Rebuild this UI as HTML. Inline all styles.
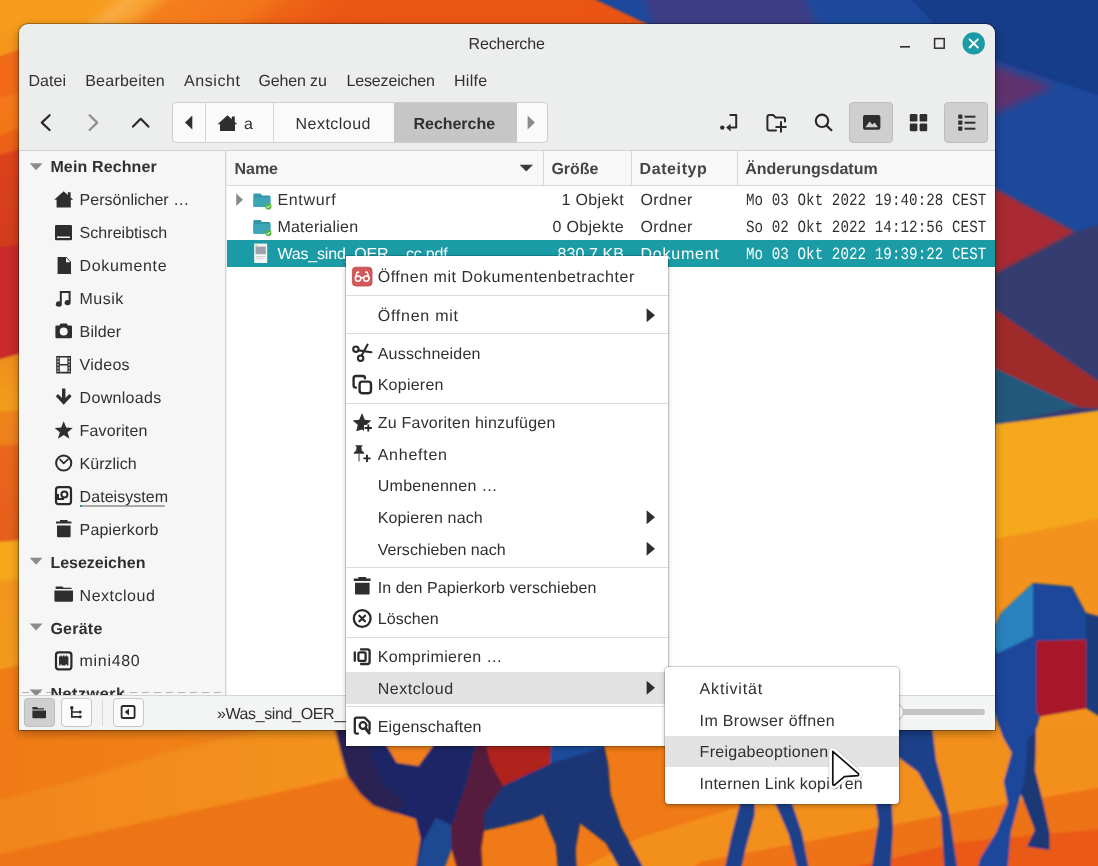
<!DOCTYPE html>
<html lang="de"><head><meta charset="utf-8"><title>Recherche</title>
<style>
html,body{margin:0;padding:0}
body{width:1098px;height:866px;overflow:hidden;position:relative;background:#f07a18;font-family:"Liberation Sans",sans-serif;font-size:16px;color:#303030}
#bg{position:absolute;left:0;top:0;width:1098px;height:866px}
.abs{position:absolute}
.t{position:absolute;white-space:pre;line-height:20px;height:20px;font-size:16px;text-rendering:geometricPrecision}
.s{font-family:"Liberation Sans",sans-serif}
.m{font-family:"Liberation Mono",monospace;transform:scaleY(1.2);transform-origin:0 55%}
.b{font-weight:bold}
#win{position:absolute;left:19px;top:24px;width:976px;height:706px;background:#eceded;border-radius:9px 9px 0 0;box-shadow:0 0 0 1px rgba(0,0,0,.3),0 3px 10px rgba(0,0,0,.35);overflow:hidden}
#page{position:absolute;left:0;top:0;width:1098px;height:866px}
#sidebar{position:absolute;left:19px;top:150px;width:207px;height:545px;background:#f6f6f6;border-right:1px solid #d4d4d4;border-top:1px solid #d0d0d0;box-sizing:border-box}
#listhead{position:absolute;left:227px;top:150px;width:768px;height:36px;background:#f8f8f8;border-top:1px solid #d0d0d0;border-bottom:1px solid #d6d6d6;box-sizing:border-box}
#list{position:absolute;left:227px;top:186px;width:768px;height:509px;background:#fff}
#selrow{position:absolute;left:227px;top:240px;width:768px;height:26.5px;background:#1a9ba6}
.colsep{position:absolute;top:151px;width:1px;height:34px;background:#d9d9d9}
#status{position:absolute;left:19px;top:695px;width:976px;height:35px;background:#f3f4f4;border-top:1px solid #d4d4d4;box-sizing:border-box}
#pathbar{position:absolute;left:172px;top:102px;width:376px;height:41px;box-sizing:border-box;border:1px solid #cdcdcd;border-radius:4px;background:#fafafa;overflow:hidden}
.psep{position:absolute;top:0;width:1px;height:41px;background:#d4d4d4}
.tbtn{position:absolute;top:102px;height:41px;box-sizing:border-box;border:1px solid #bdbdbd;border-radius:4px;background:#cfcfcf}
.sbtn{position:absolute;top:698px;width:30.6px;height:29px;box-sizing:border-box;border:1px solid #c6c6c6;border-radius:4px;background:#fbfbfb}
.clipnet{height:10px;overflow:hidden}
#menu{position:absolute;left:346px;top:256px;width:321.5px;height:490px;background:#fff;box-shadow:0 0 0 1px rgba(0,0,0,.16),0 2px 5px rgba(0,0,0,.25)}
#submenu{position:absolute;left:664.5px;top:666.5px;width:234.5px;height:137px;background:#fff;border-radius:4px;box-shadow:0 0 0 1px rgba(0,0,0,.16),0 2px 5px rgba(0,0,0,.25)}
.msep{position:absolute;left:346px;width:321.5px;height:1px;background:#dcdcdc}
.mhl{position:absolute;background:#e2e2e2}
svg{position:absolute;overflow:visible}
</style></head><body>
<svg id="bg" width="1098" height="866" viewBox="0 0 1098 866">
<defs>
<linearGradient id="gTop" x1="0" y1="0" x2="1" y2="0">
 <stop offset="0" stop-color="#f79c1d"/><stop offset=".066" stop-color="#f79c1d"/><stop offset=".082" stop-color="#f9ab42"/>
 <stop offset=".1" stop-color="#f8a030"/><stop offset=".12" stop-color="#f57f1c"/><stop offset=".195" stop-color="#f3741a"/>
 <stop offset=".22" stop-color="#ee6416"/><stop offset=".27" stop-color="#ea5614"/><stop offset="1" stop-color="#e95214"/>
</linearGradient>
<linearGradient id="gLeft" gradientUnits="userSpaceOnUse" x1="0" y1="0" x2="0" y2="866">
 <stop offset="0" stop-color="#f79d1d"/><stop offset=".06" stop-color="#f6931c"/><stop offset=".066" stop-color="#f26c18"/>
 <stop offset=".108" stop-color="#f26a17"/><stop offset=".116" stop-color="#f4791a"/><stop offset=".155" stop-color="#f37419"/>
 <stop offset=".162" stop-color="#ed6116"/><stop offset=".18" stop-color="#eb5a16"/><stop offset=".187" stop-color="#dc441b"/>
 <stop offset=".28" stop-color="#d23c1c"/><stop offset=".288" stop-color="#c92c2a"/><stop offset=".41" stop-color="#c92b2b"/>
 <stop offset=".418" stop-color="#f0901c"/><stop offset=".47" stop-color="#f49e1e"/><stop offset=".478" stop-color="#ef841a"/>
 <stop offset=".512" stop-color="#ee7f1a"/><stop offset=".518" stop-color="#e9661a"/><stop offset=".62" stop-color="#e55e1a"/>
 <stop offset=".628" stop-color="#f6a81f"/><stop offset=".665" stop-color="#f6a61f"/><stop offset=".69" stop-color="#f2921c"/>
 <stop offset=".76" stop-color="#f39a1d"/><stop offset=".775" stop-color="#f07c18"/><stop offset="1" stop-color="#f07a17"/>
</linearGradient>
<filter id="bl" x="-5%" y="-5%" width="110%" height="110%"><feGaussianBlur stdDeviation="0.8"/></filter>
<filter id="bl2" x="-10%" y="-10%" width="120%" height="120%"><feGaussianBlur stdDeviation="1.6"/></filter>
<filter id="bl3" x="-20%" y="-20%" width="140%" height="140%"><feGaussianBlur stdDeviation="4"/></filter>
<linearGradient id="gl0" gradientUnits="userSpaceOnUse" x1="0" y1="0.0" x2="0" y2="59.7"><stop offset="0" stop-color="#f79d1d"/><stop offset="1" stop-color="#f6941c"/></linearGradient>
<linearGradient id="gl1" gradientUnits="userSpaceOnUse" x1="0" y1="59.7" x2="0" y2="100.0"><stop offset="0" stop-color="#f26b18"/><stop offset="1" stop-color="#f26a17"/></linearGradient>
<linearGradient id="gl2" gradientUnits="userSpaceOnUse" x1="0" y1="100.0" x2="0" y2="138.5"><stop offset="0" stop-color="#f4781a"/><stop offset="1" stop-color="#f37519"/></linearGradient>
<linearGradient id="gl3" gradientUnits="userSpaceOnUse" x1="0" y1="138.5" x2="0" y2="158.8"><stop offset="0" stop-color="#ed6216"/><stop offset="1" stop-color="#eb5c16"/></linearGradient>
<linearGradient id="gl4" gradientUnits="userSpaceOnUse" x1="0" y1="158.8" x2="0" y2="248.3"><stop offset="0" stop-color="#db431b"/><stop offset="1" stop-color="#d23b1c"/></linearGradient>
<linearGradient id="gl5" gradientUnits="userSpaceOnUse" x1="0" y1="248.3" x2="0" y2="362.6"><stop offset="0" stop-color="#c92b2b"/><stop offset="1" stop-color="#c92b2b"/></linearGradient>
<linearGradient id="gl6" gradientUnits="userSpaceOnUse" x1="0" y1="362.6" x2="0" y2="412.0"><stop offset="0" stop-color="#f0901c"/><stop offset="1" stop-color="#f49e1e"/></linearGradient>
<linearGradient id="gl7" gradientUnits="userSpaceOnUse" x1="0" y1="412.0" x2="0" y2="447.0"><stop offset="0" stop-color="#ef841a"/><stop offset="1" stop-color="#ee801a"/></linearGradient>
<linearGradient id="gl8" gradientUnits="userSpaceOnUse" x1="0" y1="447.0" x2="0" y2="542.8"><stop offset="0" stop-color="#e9661a"/><stop offset="1" stop-color="#e55e1a"/></linearGradient>
<linearGradient id="gl9" gradientUnits="userSpaceOnUse" x1="0" y1="542.8" x2="0" y2="582.0"><stop offset="0" stop-color="#f6a81f"/><stop offset="1" stop-color="#f6a61f"/></linearGradient>
<linearGradient id="gl10" gradientUnits="userSpaceOnUse" x1="0" y1="582.0" x2="0" y2="672.0"><stop offset="0" stop-color="#f2951c"/><stop offset="1" stop-color="#f39a1d"/></linearGradient>
<linearGradient id="gl11" gradientUnits="userSpaceOnUse" x1="0" y1="672.0" x2="0" y2="870.0"><stop offset="0" stop-color="#f07b18"/><stop offset="1" stop-color="#f07a17"/></linearGradient>
<linearGradient id="gAbove" gradientUnits="userSpaceOnUse" x1="20" y1="0" x2="330" y2="0"><stop offset="0" stop-color="#f07b18"/><stop offset="1" stop-color="#f2881b"/></linearGradient>
<linearGradient id="gBand" gradientUnits="userSpaceOnUse" x1="0" y1="0" x2="330" y2="0"><stop offset="0" stop-color="#f1861a"/><stop offset="1" stop-color="#f4921e"/></linearGradient>
</defs>
<rect width="1098" height="866" fill="#f07a17"/>
<!-- left strip -->
<g filter="url(#bl)">
<polygon points="-12,-12 24,-12 24,49 -12,61.1" fill="url(#gl0)"/>
<polygon points="-12,60.1 24,48 24,92.9 -12,101.1" fill="url(#gl1)"/>
<polygon points="-12,100.1 24,91.9 24,127.8 -12,139.9" fill="url(#gl2)"/>
<polygon points="-12,138.9 24,126.8 24,148.2 -12,160.2" fill="url(#gl3)"/>
<polygon points="-12,159.2 24,147.2 24,245.5 -12,249.1" fill="url(#gl4)"/>
<polygon points="-12,248.1 24,244.5 24,353.5 -12,363.9" fill="url(#gl5)"/>
<polygon points="-12,362.9 24,352.5 24,411.2 -12,412.6" fill="url(#gl6)"/>
<polygon points="-12,411.6 24,410.2 24,445.2 -12,447.7" fill="url(#gl7)"/>
<polygon points="-12,446.7 24,444.2 24,541 -12,543.5" fill="url(#gl8)"/>
<polygon points="-12,542.5 24,540 24,580 -12,582.7" fill="url(#gl9)"/>
<polygon points="-12,581.7 24,579 24,664.9 -12,673.1" fill="url(#gl10)"/>
<polygon points="-12,672.1 24,663.9 24,880 -12,880" fill="url(#gl11)"/>
</g>
<!-- top strip -->
<rect x="-12" y="-12" width="60" height="42" fill="#f79c1d"/>
<g transform="skewX(-50)"><rect x="0" y="-12" width="1200" height="44" fill="url(#gTop)" transform="translate(30,0)"/></g>
<g filter="url(#bl)">
<!-- top right blue -->
<polygon points="571,-12 1112,-12 1112,30 660,30" fill="#1d4a9c"/>
<polygon points="640,-12 800,-12 820,30 655,30" fill="#3c3c86" filter="url(#bl3)"/>
<polygon points="900,-12 1112,-12 1112,95 995,60 940,30" fill="#173c8a"/>
<!-- right strip -->
<rect x="990" y="30" width="125" height="400" fill="#1b4a9b"/>
<polygon points="990,30 1112,30 1112,100 990,59" fill="#173c8a"/>
<polygon points="990,64 1054,86.6 990,116" fill="#6e2f66" opacity=".85" filter="url(#bl3)"/>
<polygon points="990,272 1075,232 1112,220 1112,430 990,430" fill="#353d6f"/>
<polygon points="988,185 1075,232 988,277" fill="#a92c30" filter="url(#bl2)"/>
<polygon points="990,306 1112,391 1112,409 1078,407 990,366" fill="#9e2a2c"/>
<polygon points="990,366 1078,407 990,426" fill="#23587c"/>
<path d="M 990 425 Q 1040 419 1112 409 L 1112 520 L 990 545 Z" fill="#f6a81f"/>
<polygon points="990,540 1112,516 1112,745 990,745" fill="#f3921d"/>
</g>

<!-- bottom bands -->
<g filter="url(#bl)">
<polygon points="20,720 420,720 420,760 20,810" fill="url(#gAbove)"/>
<polygon points="-12,803 67,783 167,753 233,737 260,728 420,728 420,760 366,773 300,788 -12,857" fill="url(#gBand)" filter="url(#bl2)"/>
<polygon points="-12,857 300,788 366,773 420,760 420,880 -12,880" fill="#ee7517"/>
<polygon points="560,880 639,838 740,806 860,768 899,728 1112,728 1112,785.5 960,812 700,862 680,880" fill="#f3901d"/>
<polygon points="680,880 700,862 960,812 1112,785.5 1112,828 960,842 800,880" fill="#ee7317"/>
<polygon points="800,880 960,842 1112,828 1112,880" fill="#ea5a14"/>
<!-- camel 1 -->
<path d="M 335 726 L 341.9 753.9 L 348.2 775.6 L 361 793.4 L 373.8 804.9 L 395 812.5 L 415.8 818.9 L 420.5 838.7 L 414 880 L 440 880 L 451.7 848.3 L 460.6 880 L 482.5 880 L 481 848 L 483.8 830.5 L 503 826.4 L 532 819 L 543 814 L 556 845 L 559 880 L 577 880 L 575.5 849 L 580 823 L 606 843 L 626 880 L 650 880 L 621 827 L 610.5 794.6 L 608 764 L 603 740 L 600 700 L 334 700 Z" fill="#1b2866"/>
<polygon points="382,738 396.7,762.8 418.4,766 436,742 438,738" fill="#f1801a"/>
<polygon points="335,726 341.9,753.9 348.2,775.6 361,793.4 373.8,804.9 395,812.5 406,802 385,786 372,760 366,726" fill="#2b2252" filter="url(#bl2)"/>
<polygon points="423,842 436,818 451,825 451.7,848.3 440,880 414,880" fill="#1c4a92"/>
<polygon points="477,740 485,740 490,762 503,786 490,805 483.8,814 483.8,830.5 481,848 482.5,880 460.6,880 451.7,848.3 451,825 453.8,821 467.4,780" fill="#561c3e"/>
<polygon points="485,740 551.5,740 550,764 503,786 490,762" fill="#b0201c"/>
<polygon points="551.5,740 603,740 603,748 550,764" fill="#1f4c9a"/>
<polygon points="503,786 550,764 603,748 608,764 610.5,794.6 621,827 650,880 626,880 606,843 580,823 575.5,849 577,880 559,880 556,845 543,814 532,819 503,826.4 483.8,830.5 483.8,814 490,805" fill="#1b3474"/>
<!-- camel 2 legs -->
<polygon points="741,800 755,800 754.5,816 745.8,848 739,880 722.4,880 731,838" fill="#1b3f8a"/>
<polygon points="773.7,800 791,800 802,833 811,880 800,880 789,835" fill="#1b3f8a"/>
<polygon points="875,800 891.7,800 893,830 890,880 870,880 878.6,822" fill="#1b3f8a"/>
<polygon points="895,725 932,725 936,760 943,786 950,818 959,880 945,880 941,814 918,772 895,755" fill="#1b3f8a"/>
<!-- camel 3 -->
<path d="M 990 636 L 1001 613 L 1033 583 L 1072 586.5 L 1086 613 L 1112 620 L 1112 724 L 1086 708 L 1040 716 L 1036 730 L 1035 771 L 1043.3 803.8 L 1049.4 832 L 1049.4 850 L 1027 846.5 L 1029 842.4 L 1035 830 L 1021 793.7 L 1010.8 832 L 1006.7 880 L 975 880 L 980 858.7 L 996.6 832 L 1007.8 803.8 L 1003.7 781.5 L 1011.8 753 L 1002.7 736.7 L 990 700 Z" fill="#1c469a"/>
<polygon points="990,640 1001,613 1033,583 1033,636 997.7,653.6" fill="#2a82bf"/>
<polygon points="1036.5,641 1086,639.5 1086,708 1040,716 1036.5,712" fill="#a8182a"/>
<polygon points="1086,613 1112,620 1112,724 1086,708" fill="#1b3a7c"/>
<polygon points="1036,730 1035,771 1043.3,803.8 1049.4,832 1049.4,850 1027,846.5 1029,842.4 1035,830 1021,793.7 1026,770 1028,740" fill="#1b3775"/>
</g>
</svg>

<div id="page">
<div id="win"></div>
<div id="sidebar"></div>
<div id="listhead"></div>
<div id="list"></div>
<div id="selrow"></div>
<div class="colsep" style="left:543px"></div><div class="colsep" style="left:631px"></div><div class="colsep" style="left:737px"></div>
<div id="status"></div>
<div id="pathbar">
 <div class="psep" style="left:32px"></div><div class="psep" style="left:100px"></div>
 <div class="abs" style="left:221px;top:0;width:123px;height:41px;background:#c6c6c6"></div>
</div>
<div class="tbtn" style="left:849px;width:44px"></div>
<div class="tbtn" style="left:944px;width:44px"></div>
<div class="sbtn" style="left:24px;background:#cfcfcf;border-color:#bdbdbd"></div>
<div class="sbtn" style="left:61px"></div>
<div class="sbtn" style="left:113px"></div>
<div class="abs" style="left:102px;top:699px;width:1px;height:27px;background:#d8d8d8"></div>
<div class="abs" style="left:22px;top:692px;width:200px;height:1px;background:repeating-linear-gradient(90deg,#b4b4b4 0 7px,transparent 7px 12px)"></div>
<div class="abs" style="left:80px;top:504.5px;width:85px;height:2px;background:#a9a9a9;border-radius:1px"></div>
<div class="abs" style="left:80px;top:504.5px;width:2px;height:2px;background:#1a9ba6"></div>
<div class="abs" style="left:897px;top:709.2px;width:88px;height:5.6px;background:#c4c4c6;border-radius:3px"></div>
<svg width="1098" height="866" viewBox="0 0 1098 866" style="left:0;top:0" fill="#2e2e2e" stroke="none">
<!-- window controls -->
<rect x="900" y="46" width="10" height="1.6"/>
<rect x="934.6" y="38.6" width="9.6" height="9.6" fill="none" stroke="#2e2e2e" stroke-width="1.5"/>
<circle cx="973.7" cy="43.4" r="11.2" fill="#1a9ba6"/>
<path d="M969.6 39.3 L977.8 47.5 M977.8 39.3 L969.6 47.5" stroke="#fff" stroke-width="1.9" stroke-linecap="round" fill="none"/>
<!-- nav chevrons -->
<path d="M49.6 115.2 L41.8 122.6 L49.6 130" fill="none" stroke="#2a2a2a" stroke-width="2.2" stroke-linecap="round" stroke-linejoin="round"/>
<path d="M89.6 115.2 L97.2 122.6 L89.6 130" fill="none" stroke="#8e8e8e" stroke-width="2.2" stroke-linecap="round" stroke-linejoin="round"/>
<path d="M133 126.6 L140.7 118.8 L148.4 126.6" fill="none" stroke="#2a2a2a" stroke-width="2.2" stroke-linecap="round" stroke-linejoin="round"/>
<!-- pathbar -->
<path d="M192.3 115.6 L192.3 129.6 L185 122.6 Z"/>
<path id="home" d="M227.5 115.3 L231.8 119.2 L231.8 116.4 L234.8 116.4 L234.8 121.9 L237.4 124.2 L235 124.2 L235 131 L220 131 L220 124.2 L217.6 124.2 Z"/>
<path d="M527.6 115.6 L527.6 129.6 L534.9 122.6 Z" fill="#8a8a8a"/>
<!-- toolbar right -->
<circle cx="722.3" cy="127.6" r="2.2"/>
<path d="M730.3 114.9 L736.2 114.9 L736.2 127.6 L728 127.6" fill="none" stroke="#2a2a2a" stroke-width="2" stroke-linejoin="round" stroke-linecap="round"/>
<path d="M730.6 123.8 L726.2 127.6 L730.6 131.4 Z"/>
<path d="M776 130.4 L769.4 130.4 Q767.4 130.4 767.4 128.4 L767.4 117 Q767.4 115 769.4 115 L773.2 115 L775.4 117.4 L783 117.4 Q785 117.4 785 119.4 L785 121.4" fill="none" stroke="#2a2a2a" stroke-width="2" stroke-linejoin="round" stroke-linecap="round"/>
<path d="M776.2 126.9 L785.8 126.9 M781 122.1 L781 131.7" fill="none" stroke="#2a2a2a" stroke-width="2" stroke-linecap="round"/>
<circle cx="822" cy="120.8" r="6.2" fill="none" stroke="#2a2a2a" stroke-width="2.1"/>
<path d="M826.6 125.6 L831.4 130.2" stroke="#2a2a2a" stroke-width="2.2" stroke-linecap="round"/>
<rect x="863" y="115" width="17.4" height="14.8" rx="2"/>
<path d="M865.4 127.2 L869.6 121.6 L872.4 124.6 L874.6 122.6 L878 127.2 Z" fill="#cfcfcf"/>
<rect x="909.8" y="114" width="7.6" height="7.6" rx="1.2"/><rect x="919.6" y="114" width="7.6" height="7.6" rx="1.2"/>
<rect x="909.8" y="123.6" width="7.6" height="7.6" rx="1.2"/><rect x="919.6" y="123.6" width="7.6" height="7.6" rx="1.2"/>
<rect x="958.2" y="114.6" width="4.2" height="4.2" rx=".8"/><rect x="964.6" y="115.7" width="10.8" height="2"/>
<rect x="958.2" y="120.6" width="4.2" height="4.2" rx=".8"/><rect x="964.6" y="121.7" width="10.8" height="2"/>
<rect x="958.2" y="126.6" width="4.2" height="4.2" rx=".8"/><rect x="964.6" y="127.7" width="10.8" height="2"/>
<!-- sidebar expanders -->
<g fill="#8c8c8c">
<path d="M29.6 163.2 L42.6 163.2 L36.1 170.2 Z"/>
<path d="M29.6 557.8 L42.6 557.8 L36.1 564.8 Z"/>
<path d="M29.6 623.6 L42.6 623.6 L36.1 630.6 Z"/>
<path d="M29.6 689.4 L42.6 689.4 L37.4 695 L34.8 695 Z"/>
</g>
<!-- sidebar icons -->
<path d="M63.7 191.2 L67.8 194.9 L67.8 192.2 L70.6 192.2 L70.6 197.4 L73.2 199.8 L70.8 199.8 L70.8 207.6 L56.6 207.6 L56.6 199.8 L54.2 199.8 Z"/>
<path d="M56.2 225 L70.8 225 Q72 225 72 226.2 L72 239 Q72 240.2 70.8 240.2 L56.2 240.2 Q55 240.2 55 239 L55 226.2 Q55 225 56.2 225 Z M57 236.6 L57 238 L70 238 L70 236.6 Z"/>
<path d="M57.6 257 L66.4 257 L71 261.8 L71 274 L57.6 274 Z M66 257.6 L66 262.2 L70.4 262.2 Z" fill-rule="evenodd"/>
<path d="M59.8 291 L70.6 291 L70.6 302.6 A3 2.6 0 1 1 68.6 300.2 L68.6 293 L61.8 293 L61.8 304 A3 2.6 0 1 1 59.8 301.6 Z"/>
<path d="M56.6 325.4 L59.4 325.4 L60.6 323.4 L66.8 323.4 L68 325.4 L70.8 325.4 Q72 325.4 72 326.6 L72 337 Q72 338.2 70.8 338.2 L56.6 338.2 Q55.4 338.2 55.4 337 L55.4 326.6 Q55.4 325.4 56.6 325.4 Z M63.7 327.6 A4 4 0 1 0 63.7 335.6 A4 4 0 1 0 63.7 327.6 Z" fill-rule="evenodd"/>
<path d="M56.2 356 L71 356 L71 373.4 L56.2 373.4 Z M59.8 357.6 L59.8 364 L67.4 364 L67.4 357.6 Z M59.8 365.6 L59.8 371.8 L67.4 371.8 L67.4 365.6 Z M57.4 357.6 h1.2 v1.6 h-1.2 Z M57.4 360.8 h1.2 v1.6 h-1.2 Z M57.4 364 h1.2 v1.6 h-1.2 Z M57.4 367.2 h1.2 v1.6 h-1.2 Z M57.4 370.2 h1.2 v1.6 h-1.2 Z M68.6 357.6 h1.2 v1.6 h-1.2 Z M68.6 360.8 h1.2 v1.6 h-1.2 Z M68.6 364 h1.2 v1.6 h-1.2 Z M68.6 367.2 h1.2 v1.6 h-1.2 Z M68.6 370.2 h1.2 v1.6 h-1.2 Z" fill-rule="evenodd"/>
<path d="M62 388.6 L65.4 388.6 L65.4 398 L69.4 394 L71.6 396.2 L63.7 404.8 L55.8 396.2 L58 394 L62 398 Z"/>
<path d="M63.7 421.2 L66.2 427.6 L72.8 428 L67.6 432.2 L69.4 438.8 L63.7 435 L58 438.8 L59.8 432.2 L54.6 428 L61.2 427.6 Z"/>
<circle cx="63.7" cy="463" r="7.6" fill="none" stroke="#2a2a2a" stroke-width="2"/>
<path d="M60 459.4 L63.7 463.4 L68.2 459" fill="none" stroke="#2a2a2a" stroke-width="1.7" stroke-linecap="round" stroke-linejoin="round"/>
<rect x="56" y="487.2" width="15" height="17" rx="2.6" fill="none" stroke="#2a2a2a" stroke-width="2.2"/>
<circle cx="64.4" cy="494.4" r="3" fill="none" stroke="#2a2a2a" stroke-width="2"/>
<path d="M58 494 L58 499 L64 499" fill="none" stroke="#2a2a2a" stroke-width="2"/>
<path d="M60 520 L67.6 520 L67.6 521.4 L71.4 521.4 L71.4 523.6 L56 523.6 L56 521.4 L60 521.4 Z M57 525.4 L70.6 525.4 L70.6 536 Q70.6 537.2 69.4 537.2 L58.2 537.2 Q57 537.2 57 536 Z"/>
<path d="M55.6 586.4 L62.4 586.4 L63.6 587.8 L71.6 587.8 L71.6 589 L55.6 589 Z M54.4 590.4 L73 590.4 L73 600.4 Q73 601.8 71.6 601.8 L55.8 601.8 Q54.4 601.8 54.4 600.4 Z"/>
<rect x="56" y="652.4" width="15.4" height="17" rx="2.6" fill="none" stroke="#2a2a2a" stroke-width="2.2"/>
<path d="M59 656.4 L60.4 656.4 L60.4 655.6 L61.8 655.6 L61.8 656.4 L63 656.4 L63 655.6 L64.4 655.6 L64.4 656.4 L65.6 656.4 L65.6 655.6 L67 655.6 L67 656.4 L68.4 656.4 L68.4 665.4 L67 665.4 L67 664.4 L65.6 664.4 L65.6 665.4 L61.8 665.4 L61.8 664.4 L60.4 664.4 L60.4 665.4 L59 665.4 Z"/>
<!-- list header sort arrow & row icons -->
<path d="M519.6 164.8 L533 164.8 L526.3 171.4 Z" fill="#3a3a3a"/>
<path d="M236.2 193.4 L236.2 206 L243 199.7 Z" fill="#8a8a8a"/>
<g id="fold1">
<path d="M253.4 194.6 Q253.4 193.4 254.6 193.4 L260.4 193.4 L262.2 195.4 L269.2 195.4 Q270.4 195.4 270.4 196.6 L270.4 205.8 Q270.4 207 269.2 207 L254.6 207 Q253.4 207 253.4 205.8 Z" fill="#3196a8"/>
<path d="M253.4 197.4 L270.4 197.4 L270.4 205.8 Q270.4 207 269.2 207 L254.6 207 Q253.4 207 253.4 205.8 Z" fill="#3ca6b7"/>
<circle cx="268.4" cy="206.4" r="3.1" fill="#55b43c"/>
<path d="M266.8 206.5 L268 207.7 L270 205.3" fill="none" stroke="#fff" stroke-width="1"/>
</g>
<g transform="translate(0,26.7)">
<path d="M253.4 194.6 Q253.4 193.4 254.6 193.4 L260.4 193.4 L262.2 195.4 L269.2 195.4 Q270.4 195.4 270.4 196.6 L270.4 205.8 Q270.4 207 269.2 207 L254.6 207 Q253.4 207 253.4 205.8 Z" fill="#3196a8"/>
<path d="M253.4 197.4 L270.4 197.4 L270.4 205.8 Q270.4 207 269.2 207 L254.6 207 Q253.4 207 253.4 205.8 Z" fill="#3ca6b7"/>
<circle cx="268.4" cy="206.4" r="3.1" fill="#55b43c"/>
<path d="M266.8 206.5 L268 207.7 L270 205.3" fill="none" stroke="#fff" stroke-width="1"/>
</g>
<rect x="254.2" y="243.6" width="13" height="19.4" fill="#f4f4f4"/>
<rect x="255.6" y="246.6" width="10.2" height="7.6" fill="#9aa3ad"/>
<rect x="255.6" y="245" width="2" height="1" fill="#d8c24a"/>
<rect x="256" y="256.4" width="9" height=".8" fill="#bbb"/><rect x="256" y="258.4" width="7" height=".8" fill="#ccc"/>
<!-- statusbar icons -->
<path d="M32.4 707 L37 707 L38 708.2 L44 708.2 L44 709.4 L32.4 709.4 Z M32.4 710.4 L46 710.4 L46 717.4 Q46 718.2 45.2 718.2 L33.2 718.2 Q32.4 718.2 32.4 717.4 Z" />
<circle cx="71.8" cy="707.8" r="1.7"/><path d="M71.8 708 L71.8 716.8 L79 716.8 M71.8 712 L79 712" fill="none" stroke="#2a2a2a" stroke-width="1.7"/><circle cx="80.2" cy="712" r="1.5"/><circle cx="80.2" cy="716.8" r="1.5"/>
<rect x="121.6" y="706" width="13" height="12" rx="1.6" fill="none" stroke="#2a2a2a" stroke-width="1.8"/>
<path d="M129 708.6 L129 715.4 L124.6 712 Z"/>
<circle cx="895" cy="712" r="8.4" fill="#fbfbfb" stroke="#b8b8b8" stroke-width="1"/>
</svg>

<div class="t s" style="left:468.60px;top:35.00px;letter-spacing:-0.142px;">Recherche</div>
<div class="t s" style="left:28.50px;top:72.00px;letter-spacing:0.048px;">Datei</div>
<div class="t s" style="left:85.20px;top:72.00px;letter-spacing:0.241px;">Bearbeiten</div>
<div class="t s" style="left:184.00px;top:72.00px;letter-spacing:0.576px;">Ansicht</div>
<div class="t s" style="left:258.50px;top:72.00px;letter-spacing:-0.149px;">Gehen zu</div>
<div class="t s" style="left:346.50px;top:72.00px;letter-spacing:-0.149px;">Lesezeichen</div>
<div class="t s" style="left:454.00px;top:72.00px;letter-spacing:0.297px;">Hilfe</div>
<div class="t s" style="left:244.10px;top:115.00px;">a</div>
<div class="t s" style="left:295.50px;top:115.00px;letter-spacing:0.483px;">Nextcloud</div>
<div class="t s b" style="left:413.50px;top:115.00px;letter-spacing:-0.036px;">Recherche</div>
<div class="t s b" style="left:50.40px;top:158.00px;letter-spacing:0.132px;">Mein Rechner</div>
<div class="t s" style="left:79.60px;top:191.00px;letter-spacing:0.016px;">Persönlicher …</div>
<div class="t s" style="left:79.60px;top:224.00px;letter-spacing:0.037px;">Schreibtisch</div>
<div class="t s" style="left:79.60px;top:257.00px;letter-spacing:0.641px;">Dokumente</div>
<div class="t s" style="left:79.60px;top:290.00px;letter-spacing:0.444px;">Musik</div>
<div class="t s" style="left:79.60px;top:323.00px;letter-spacing:0.132px;">Bilder</div>
<div class="t s" style="left:79.60px;top:356.00px;letter-spacing:0.277px;">Videos</div>
<div class="t s" style="left:79.60px;top:389.00px;letter-spacing:0.305px;">Downloads</div>
<div class="t s" style="left:79.60px;top:422.00px;letter-spacing:0.133px;">Favoriten</div>
<div class="t s" style="left:79.60px;top:455.00px;letter-spacing:0.012px;">Kürzlich</div>
<div class="t s" style="left:79.60px;top:488.00px;letter-spacing:0.052px;">Dateisystem</div>
<div class="t s" style="left:79.60px;top:521.00px;letter-spacing:0.163px;">Papierkorb</div>
<div class="t s b" style="left:50.40px;top:554.00px;letter-spacing:-0.014px;">Lesezeichen</div>
<div class="t s" style="left:79.60px;top:587.00px;letter-spacing:0.505px;">Nextcloud</div>
<div class="t s b" style="left:50.40px;top:620.00px;letter-spacing:0.249px;">Geräte</div>
<div class="t s" style="left:79.60px;top:652.00px;letter-spacing:0.681px;">mini480</div>
<div class="t s b clipnet" style="left:50.40px;top:685.00px;letter-spacing:0.606px;">Netzwerk</div>
<div class="t s b" style="left:234.60px;top:160.00px;letter-spacing:-0.070px;color:#454545;">Name</div>
<div class="t s b" style="left:551.40px;top:160.00px;letter-spacing:-0.005px;color:#454545;">Größe</div>
<div class="t s b" style="left:639.50px;top:160.00px;letter-spacing:0.609px;color:#454545;">Dateityp</div>
<div class="t s b" style="left:745.20px;top:160.00px;letter-spacing:0.003px;color:#454545;">Änderungsdatum</div>
<div class="t s" style="left:277.40px;top:191.00px;letter-spacing:0.679px;">Entwurf</div>
<div class="t s" style="left:277.40px;top:218.00px;letter-spacing:0.249px;">Materialien</div>
<div class="t s" style="left:277.40px;top:245.00px;letter-spacing:-0.181px;color:#ffffff;">Was_sind_OER__cc.pdf</div>
<div class="t s" style="left:561.40px;top:191.00px;letter-spacing:0.376px;">1 Objekt</div>
<div class="t s" style="left:552.50px;top:218.00px;letter-spacing:0.324px;">0 Objekte</div>
<div class="t s" style="left:557.60px;top:245.00px;letter-spacing:0.071px;color:#ffffff;">830,7 KB</div>
<div class="t s" style="left:640.50px;top:191.00px;letter-spacing:0.401px;">Ordner</div>
<div class="t s" style="left:640.50px;top:218.00px;letter-spacing:0.401px;">Ordner</div>
<div class="t s" style="left:640.50px;top:245.00px;letter-spacing:0.760px;color:#ffffff;">Dokument</div>
<div class="t m" style="left:746.00px;top:192.10px;letter-spacing:0.068px;font-size:14.2px;">Mo 03 Okt 2022 19:40:28 CEST</div>
<div class="t m" style="left:746.00px;top:218.80px;letter-spacing:0.068px;font-size:14.2px;">So 02 Okt 2022 14:12:56 CEST</div>
<div class="t m" style="left:746.00px;top:245.50px;letter-spacing:0.068px;color:#ffffff;font-size:14.2px;">Mo 03 Okt 2022 19:39:22 CEST</div>
<div class="t s" style="left:216.90px;top:705.00px;letter-spacing:-0.371px;">»Was_sind_OER__cc.pdf« ausgewählt (830,7 KB)</div>
<div id="menu"></div>
<div class="msep" style="top:295px"></div>
<div class="msep" style="top:333px"></div>
<div class="msep" style="top:403px"></div>
<div class="msep" style="top:566.75px"></div>
<div class="msep" style="top:637px"></div>
<div class="msep" style="top:706px"></div>
<div class="mhl" style="left:346px;top:672px;width:321.5px;height:31.5px"></div>
<div id="submenu"></div>
<div class="mhl" style="left:664.5px;top:735.5px;width:234.5px;height:31.5px"></div>
<svg width="1098" height="866" viewBox="0 0 1098 866" style="left:0;top:0" fill="#2e2e2e" stroke="none">
<!-- submenu arrows -->
<path d="M646.6 308.2 L646.6 322.2 L655 315.2 Z"/>
<path d="M646.6 510.2 L646.6 524.2 L655 517.2 Z"/>
<path d="M646.6 541.8 L646.6 555.8 L655 548.8 Z"/>
<path d="M646.6 680.8 L646.6 694.8 L655 687.8 Z"/>
<!-- document viewer -->
<rect x="352.4" y="267.2" width="19.6" height="18.8" rx="3.4" fill="#d4585a"/>
<rect x="352.4" y="267.2" width="19.6" height="18.8" rx="3.4" fill="none" stroke="#b94648" stroke-width=".8"/>
<g fill="none" stroke="#fff" stroke-width="1.5" stroke-linecap="round">
<circle cx="358.1" cy="278.6" r="2.7"/><circle cx="366.3" cy="278.6" r="2.7"/>
<path d="M360.8 278 Q362.2 277 363.6 278 M355.4 278 L357 272.8 Q357.4 271.8 358.6 272.2 M369 278 L367.4 272.8 Q367 271.8 365.8 272.2"/>
</g>
<!-- scissors -->
<g fill="none" stroke="#2a2a2a" stroke-width="2.1" stroke-linecap="round">
<circle cx="355.9" cy="349.2" r="2.7"/><circle cx="360.6" cy="358.2" r="2.7"/>
<path d="M358.6 350.4 L371.4 352.2 M361.6 355.6 L367.6 344.6"/>
</g>
<!-- copy -->
<g fill="none" stroke="#2a2a2a" stroke-width="2.4" stroke-linecap="round" stroke-linejoin="round">
<rect x="359.6" y="381.6" width="11.4" height="11.6" rx="2.6"/>
<path d="M356 387.6 Q353.6 387.6 353.6 385.2 L353.6 378.4 Q353.6 376 356 376 L362.6 376 Q365 376 365 378.2"/>
</g>
<!-- star plus -->
<path d="M362 413 L364.8 419.8 L371.4 420.4 L366.6 424.6 L367.2 425 L364 425 L364 431 L362 429.4 L356.2 431.2 L357.8 424.8 L352.6 420.4 L359.2 419.8 Z"/>
<path d="M368.3 424.4 L368.3 431.6 M364.7 428 L371.9 428" stroke="#2a2a2a" stroke-width="1.9" fill="none"/>
<!-- pin plus -->
<path d="M355.6 445.2 L362.4 445.2 L362.4 446.6 L361.4 446.8 L361.8 450.4 Q364.2 451.6 364.4 453.8 L353.6 453.8 Q353.8 451.6 356.2 450.4 L356.6 446.8 L355.6 446.6 Z"/>
<path d="M359 453.6 L359 461.4" stroke="#555" stroke-width="1.2"/>
<path d="M367 454.8 L367 462 M363.4 458.4 L370.6 458.4" stroke="#2a2a2a" stroke-width="1.9" fill="none"/>
<!-- trash -->
<path d="M358.4 577 L366.2 577 L366.2 578.6 L370.6 578.6 L370.6 581 L353.8 581 L353.8 578.6 L358.4 578.6 Z M355 582.8 L369.6 582.8 L369.6 593.4 Q369.6 594.6 368.4 594.6 L356.2 594.6 Q355 594.6 355 593.4 Z"/>
<!-- delete -->
<circle cx="362.2" cy="618.5" r="8.4" fill="none" stroke="#2a2a2a" stroke-width="2.3"/>
<path d="M359.4 615.7 L365 621.3 M365 615.7 L359.4 621.3" stroke="#2a2a2a" stroke-width="2.2" stroke-linecap="round"/>
<!-- compress -->
<g fill="none" stroke="#2a2a2a" stroke-width="2.3" stroke-linecap="round" stroke-linejoin="round">
<rect x="358.4" y="652.4" width="7.2" height="8.4" rx="1.4"/>
<path d="M361 649.4 L367.4 649.4 Q369.6 649.4 369.6 651.6 L369.6 661.8 Q369.6 664 367.4 664 L361 664"/>
<path d="M354.8 652.4 L354.8 660.8"/>
</g>
<!-- properties -->
<g fill="none" stroke="#2a2a2a" stroke-width="2.3" stroke-linecap="round" stroke-linejoin="round">
<path d="M358 733.6 L356.8 733.6 Q354.8 733.6 354.8 731.6 L354.8 719.6 Q354.8 717.6 356.8 717.6 L364.6 717.6 L369.6 722.4 L369.6 730"/>
<circle cx="363" cy="725.6" r="3.4"/>
<path d="M365.6 728.4 L369.2 733" stroke-width="3"/>
</g>
</svg>

<div class="t s" style="left:377.70px;top:268.00px;letter-spacing:0.528px;">Öffnen mit Dokumentenbetrachter</div>
<div class="t s" style="left:377.70px;top:307.00px;letter-spacing:0.758px;">Öffnen mit</div>
<div class="t s" style="left:377.70px;top:345.00px;letter-spacing:0.207px;">Ausschneiden</div>
<div class="t s" style="left:377.70px;top:376.00px;letter-spacing:0.244px;">Kopieren</div>
<div class="t s" style="left:377.70px;top:414.00px;letter-spacing:0.233px;">Zu Favoriten hinzufügen</div>
<div class="t s" style="left:377.70px;top:446.00px;letter-spacing:0.742px;">Anheften</div>
<div class="t s" style="left:377.70px;top:477.00px;letter-spacing:0.290px;">Umbenennen …</div>
<div class="t s" style="left:377.70px;top:509.00px;letter-spacing:0.155px;">Kopieren nach</div>
<div class="t s" style="left:377.70px;top:541.00px;letter-spacing:0.056px;">Verschieben nach</div>
<div class="t s" style="left:377.70px;top:579.00px;letter-spacing:0.061px;">In den Papierkorb verschieben</div>
<div class="t s" style="left:377.70px;top:610.00px;letter-spacing:0.071px;">Löschen</div>
<div class="t s" style="left:377.70px;top:648.00px;letter-spacing:0.355px;">Komprimieren …</div>
<div class="t s" style="left:377.70px;top:680.00px;letter-spacing:0.538px;">Nextcloud</div>
<div class="t s" style="left:377.70px;top:718.00px;letter-spacing:0.200px;">Eigenschaften</div>
<div class="t s" style="left:699.60px;top:680.00px;letter-spacing:0.820px;">Aktivität</div>
<div class="t s" style="left:699.60px;top:712.00px;letter-spacing:0.338px;">Im Browser öffnen</div>
<div class="t s" style="left:699.60px;top:743.00px;letter-spacing:0.266px;">Freigabeoptionen</div>
<div class="t s" style="left:699.60px;top:775.00px;letter-spacing:0.226px;">Internen Link kopieren</div>
<!-- cursor -->
<svg width="40" height="48" viewBox="0 0 40 48" style="left:829px;top:746px">
<path d="M3.8 5.3 L3.8 38.6 Q4.6 40 6 38.6 L15.4 30.6 L29 29.6 Q30.4 28.6 29 27.4 Z" fill="none" stroke="#9a9a9a" stroke-width="8.4" stroke-linejoin="round" opacity=".55"/>
<path d="M3.8 5.3 L3.8 38.6 Q4.6 40 6 38.6 L15.4 30.6 L29 29.6 Q30.4 28.6 29 27.4 Z" fill="#fff" stroke="#fff" stroke-width="7.2" stroke-linejoin="round"/>
<path d="M3.8 5.3 L3.8 38.6 Q4.6 40 6 38.6 L15.4 30.6 L29 29.6 Q30.4 28.6 29 27.4 Z" fill="#fff" stroke="#111" stroke-width="1.7" stroke-linejoin="round"/>
</svg>

</div>
</body></html>
